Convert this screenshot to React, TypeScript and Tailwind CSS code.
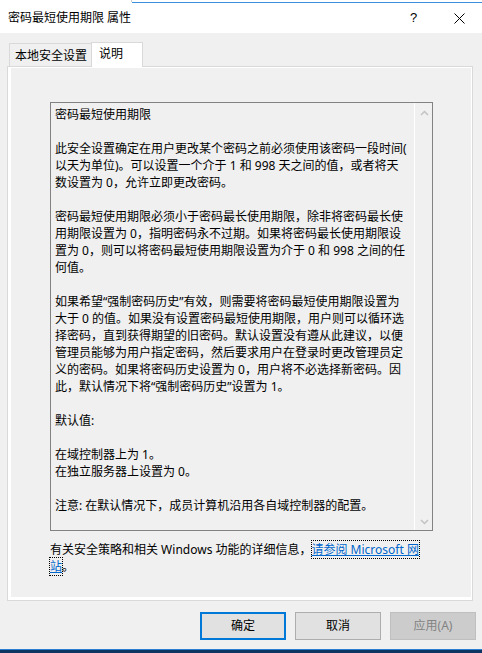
import React from "react"

const lines = [
  "密码最短使用期限",
  "",
  "此安全设置确定在用户更改某个密码之前必须使用该密码一段时间(",
  "以天为单位)。可以设置一个介于 1 和 998 天之间的值，或者将天",
  "数设置为 0，允许立即更改密码。",
  "",
  "密码最短使用期限必须小于密码最长使用期限，除非将密码最长使",
  "用期限设置为 0，指明密码永不过期。如果将密码最长使用期限设",
  "置为 0，则可以将密码最短使用期限设置为介于 0 和 998 之间的任",
  "何值。",
  "",
  "如果希望“强制密码历史”有效，则需要将密码最短使用期限设置为",
  "大于 0 的值。如果没有设置密码最短使用期限，用户则可以循环选",
  "择密码，直到获得期望的旧密码。默认设置没有遵从此建议，以便",
  "管理员能够为用户指定密码，然后要求用户在登录时更改管理员定",
  "义的密码。如果将密码历史设置为 0，用户将不必选择新密码。因",
  "此，默认情况下将“强制密码历史”设置为 1。",
  "",
  "默认值:",
  "",
  "在域控制器上为 1。",
  "在独立服务器上设置为 0。",
  "",
  "注意: 在默认情况下，成员计算机沿用各自域控制器的配置。",
]

function Chevron({ up }: { up?: boolean }) {
  return (
    <svg width="9" height="6" viewBox="0 0 9 6">
      <polyline
        points={up ? "1,5 4.5,1.5 8,5" : "1,1 4.5,4.5 8,1"}
        fill="none"
        stroke="#c2c2c2"
        strokeWidth="1.5"
      />
    </svg>
  )
}

export default function App() {
  return (
    <div className="flex h-[653px] w-[482px] flex-col overflow-hidden bg-[#f0f0f0] font-['Noto_Sans','Noto_Sans_CJK_SC',sans-serif] text-[12px] text-black">
      {/* strip of the window behind */}
      <div className="flex h-[3px] bg-white">
        <div className="w-[131px]" />
        <div className="h-[2px] w-px bg-[#cfcfcf]" />
        <div className="flex flex-1 flex-col justify-end">
          <div className="h-px bg-[#3c8fdc]" />
        </div>
      </div>

      {/* title bar */}
      <div className="flex h-[30px] items-center bg-white">
        <div className="pl-2 leading-[16px]">密码最短使用期限 属性</div>
        <div className="ml-auto flex h-full">
          <div className="flex w-[45px] items-center justify-center font-['Liberation_Sans',sans-serif] text-[13px]">
            ?
          </div>
          <div className="flex w-[46px] items-center justify-center">
            <svg width="11" height="11" viewBox="0 0 11 11">
              <path d="M0.5 0.5 L10.5 10.5 M10.5 0.5 L0.5 10.5" stroke="#000" strokeWidth="1" />
            </svg>
          </div>
        </div>
      </div>

      {/* tabs */}
      <div className="flex h-[33px] items-end pl-[9px]">
        <div className="flex h-[23px] w-[82px] items-center border-l border-t border-[#d9d9d9] pl-[5px] pt-[1px]">
          本地安全设置
        </div>
        <div className="relative z-10 -mb-px flex h-[25px] w-[52px] items-start border-x border-t border-[#d9d9d9] bg-white pl-[7px] pt-[2px]">
          说明
        </div>
      </div>

      {/* tab page */}
      <div className="ml-[7px] h-[535px] w-[466px] border border-[#d9d9d9] bg-white pb-[3px] pl-[3px] pr-px pt-px">
        <div className="h-full bg-[#f0f0f0] pl-[39px] pt-[34px]">
          <div className="flex h-[429px] w-[383px] border border-[#828282] bg-[#f0f0f0]">
            <div className="flex-1 overflow-hidden pl-[4px] pt-[3px]">
              {lines.map((t, i) => (
                <div key={i} className="h-[17px] whitespace-pre leading-[17px]">
                  {t}
                </div>
              ))}
            </div>
            <div className="flex w-[18px] flex-col items-center justify-between border-l border-white pb-[5px] pl-px pt-[7px]">
              <Chevron up />
              <Chevron />
            </div>
          </div>

          <div className="mt-[10px] leading-[17px]">
            <div className="h-[17px] whitespace-pre">
              有关安全策略和相关 Windows 功能的详细信息，
              <span className="text-[#0066cc] underline outline-1 outline-dotted outline-black">
                请参阅 Microsoft 网
              </span>
            </div>
            <div className="h-[17px] whitespace-pre">
              <span className="text-[#0066cc] underline outline-1 outline-dotted outline-black">站</span>。
            </div>
          </div>
        </div>
      </div>

      {/* buttons */}
      <div className="mt-[11px] flex gap-[9px] pl-[200px]">
        <button className="flex h-[28px] w-[86px] items-center justify-center border-2 border-[#0078d7] bg-[#e1e1e1]">
          确定
        </button>
        <button className="flex h-[28px] w-[86px] items-center justify-center border border-[#adadad] bg-[#e1e1e1]">
          取消
        </button>
        <button className="flex h-[28px] w-[86px] items-center justify-center border border-[#bfbfbf] bg-[#cccccc] text-[#838383]">
          应用(A)
        </button>
      </div>

      {/* taskbar edge */}
      <div className="mt-auto">
        <div className="h-px bg-[#2b7fd0]" />
        <div className="h-[3px] bg-[#0c3561]" />
      </div>
    </div>
  )
}
